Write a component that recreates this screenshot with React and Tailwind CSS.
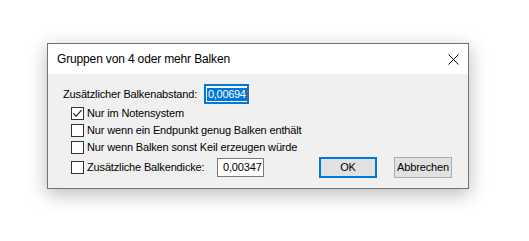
import React from 'react';

const font = { fontFamily: '"Liberation Sans", Arial, sans-serif' };

const Checkbox = ({ checked }) => (
    <span className="w-[13px] h-[13px] shrink-0 border border-[#333333] bg-white flex items-center justify-center">
        {checked && (
            <svg width="11" height="11" viewBox="0 0 11 11">
                <path d="M1.5 5.5 L4.2 8.2 L9.5 2.2" fill="none" stroke="#222" strokeWidth="1.2" />
            </svg>
        )}
    </span>
);

const CheckRow = ({ checked, label }) => (
    <div className="h-[17px] flex items-center">
        <Checkbox checked={checked} />
        <span className="ml-[3px] leading-none">{label}</span>
    </div>
);

export default function App() {
    return (
        <div className="w-[529px] h-[241px] bg-white pt-[43px] pl-[47px]" style={font}>
            <div className="w-[422px] h-[146px] border border-[#737373] bg-[#f0f0f0] shadow-[0_5px_18px_rgba(0,0,0,0.28)] flex flex-col text-black">
                {/* Title bar */}
                <div className="h-[30px] bg-white flex items-center justify-between pl-[9px] pr-[9px] shrink-0">
                    <span className="text-[12px] tracking-[-0.15px]">Gruppen von 4 oder mehr Balken</span>
                    <svg width="11" height="11" viewBox="0 0 11 11">
                        <path d="M0.5 0.5 L10.5 10.5 M10.5 0.5 L0.5 10.5" stroke="#000" strokeWidth="1" />
                    </svg>
                </div>

                {/* Body */}
                <div className="flex flex-col pt-[10px] text-[11px] tracking-[-0.15px]">
                    <div className="h-[20px] flex items-center pl-[15px]">
                        <span className="w-[141px] leading-none">Zusätzlicher Balkenabstand:</span>
                        <div className="w-[45px] h-[20px] border-2 border-[#0078d7] bg-white flex items-center pl-[1px]">
                            <span className="bg-[#0078d7] text-white h-[13px] px-[1px] flex items-center leading-none tracking-[-0.3px]">0,00694</span>
                            <span className="w-[1px] h-[13px] bg-[#b04a20]" />
                        </div>
                    </div>

                    <div className="flex flex-col pl-[23px] pt-[1px]">
                        <CheckRow checked label="Nur im Notensystem" />
                        <CheckRow label="Nur wenn ein Endpunkt genug Balken enthält" />
                        <CheckRow label="Nur wenn Balken sonst Keil erzeugen würde" />
                        <div className="h-[23px] flex items-center">
                            <div className="w-[146px] flex items-center">
                                <Checkbox />
                                <span className="ml-[3px] leading-none">Zusätzliche Balkendicke:</span>
                            </div>
                            <div className="w-[47px] h-[19px] border border-[#7a7a7a] bg-white pl-[5px] pt-[3px] leading-none">0,00347</div>
                            <button className="ml-[55px] w-[58px] h-[21px] border-2 border-[#0078d7] bg-[#e1e1e1] flex items-center justify-center leading-none">OK</button>
                            <button className="ml-[17px] w-[58px] h-[21px] border border-[#adadad] bg-[#e1e1e1] flex items-center justify-center leading-none">Abbrechen</button>
                        </div>
                    </div>
                </div>
            </div>
        </div>
    );
}
